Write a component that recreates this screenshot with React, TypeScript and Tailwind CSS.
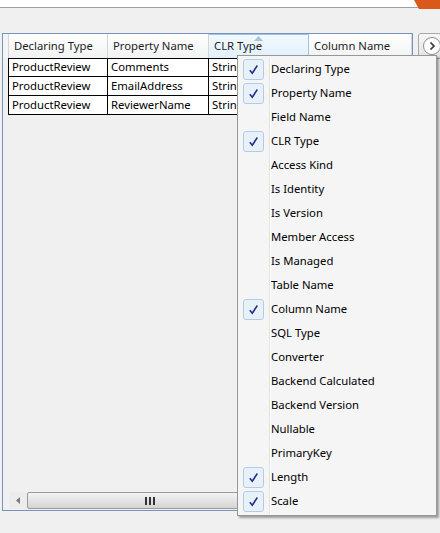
import { Fragment } from "react";

type Item = { label: string; checked: boolean };

const columns = [
    { name: "Declaring Type", w: "w-[99px]" },
    { name: "Property Name", w: "w-[101px]" },
    { name: "CLR Type", w: "w-[100px]", active: true },
    { name: "Column Name", w: "w-[103px]" },
];

const rows = [
    ["ProductReview", "Comments", "String", ""],
    ["ProductReview", "EmailAddress", "String", ""],
    ["ProductReview", "ReviewerName", "String", ""],
];

const menu: Item[] = [
    { label: "Declaring Type", checked: true },
    { label: "Property Name", checked: true },
    { label: "Field Name", checked: false },
    { label: "CLR Type", checked: true },
    { label: "Access Kind", checked: false },
    { label: "Is Identity", checked: false },
    { label: "Is Version", checked: false },
    { label: "Member Access", checked: false },
    { label: "Is Managed", checked: false },
    { label: "Table Name", checked: false },
    { label: "Column Name", checked: true },
    { label: "SQL Type", checked: false },
    { label: "Converter", checked: false },
    { label: "Backend Calculated", checked: false },
    { label: "Backend Version", checked: false },
    { label: "Nullable", checked: false },
    { label: "PrimaryKey", checked: false },
    { label: "Length", checked: true },
    { label: "Scale", checked: true },
];

function Check() {
    return (
        <div className="w-[21px] h-[21px] rounded-[3px] border border-[#b5cbe4] bg-[#e8f0fa] flex items-center justify-center">
            <svg width="11" height="11" viewBox="0 0 11 11">
                <path d="M1.8 6.2 L4.3 9.2 L9.3 1.5" fill="none" stroke="#1b2a8c" strokeWidth="1.5" />
            </svg>
        </div>
    );
}

export default function App() {
    return (
        <div className="relative w-[440px] h-[533px] overflow-hidden bg-[#f0f0f0] text-[11.3px] text-black" style={{ fontFamily: "'Noto Sans', 'Liberation Sans', sans-serif" }}>
            {/* top strip */}
            <div className="h-[8px] bg-white border-b border-[#a0a0a0]" />
            <svg className="absolute top-0 right-0" width="30" height="9" viewBox="0 0 30 9">
                <path d="M4 0 L30 0 L30 9 L9 9 Z" fill="#d9581a" />
            </svg>

            <div className="flex items-start mt-[25px]">
                {/* grid panel */}
                <div className="ml-[2px] w-[411px] h-[478px] border border-[#7594bb] bg-[#f0f0f0] flex flex-col">
                    {/* header */}
                    <div className="flex h-[24px]">
                        <div className="w-[6px] border-r border-[#d5d5d5] bg-[#f4f4f4]" />
                        {columns.map((c) => (
                            <div
                                key={c.name}
                                className={`${c.w} relative flex items-center pl-[5px] border-r ${c.active ? "bg-gradient-to-b from-[#f3f9fd] to-[#e0f0fb] border-[#96c7ea] border-t" : "bg-gradient-to-b from-white to-[#f1f2f3] border-[#d5d5d5]"}`}
                            >
                                {c.active && (
                                    <svg className="absolute top-[1px] left-[45px]" width="9" height="5" viewBox="0 0 9 5">
                                        <path d="M0 5 L4.5 0 L9 5 Z" fill="#a7c4da" />
                                    </svg>
                                )}
                                <span className="text-[#1e1e1e]">{c.name}</span>
                            </div>
                        ))}
                    </div>
                    {/* rows */}
                    <div className="flex flex-col">
                        {rows.map((r, i) => (
                            <div key={i} className="flex h-[19px]">
                                <div className="w-[6px] bg-[#f0f0f0] border-r border-black" />
                                {r.map((v, j) => (
                                    <Fragment key={j}>
                                        <div className={`${columns[j].w} bg-white border-b border-r border-black ${i === 0 ? "border-t" : ""} flex items-center pl-[3px] overflow-hidden whitespace-nowrap`}>
                                            {v}
                                        </div>
                                    </Fragment>
                                ))}
                            </div>
                        ))}
                    </div>
                    <div className="flex-1" />
                    {/* horizontal scrollbar */}
                    <div className="flex h-[17px] mb-[1px] ml-[6px]">
                        <div className="w-[18px] bg-[#ececec] flex items-center justify-center">
                            <svg width="5" height="7" viewBox="0 0 5 7">
                                <path d="M4 0 L0 3.5 L4 7 Z" fill="#7c7c7c" />
                            </svg>
                        </div>
                        <div className="flex-1 border border-[#9a9a9a] rounded-[2px] bg-gradient-to-b from-[#f3f3f3] to-[#d4d4d4] flex items-center">
                            <div className="ml-[117px] flex gap-[2px]">
                                <div className="w-[2px] h-[8px] bg-[#333]" />
                                <div className="w-[2px] h-[8px] bg-[#333]" />
                                <div className="w-[2px] h-[8px] bg-[#333]" />
                            </div>
                        </div>
                    </div>
                </div>

                {/* side button */}
                <div className="ml-[5px] w-[30px] h-[26px] rounded-[3px] border border-[#a8a8a8] bg-gradient-to-b from-[#f8f8f8] to-[#e2e2e2] flex items-center pl-[4px]">
                    <div className="w-[18px] h-[18px] rounded-full border border-[#8d8d8d] bg-white flex items-center justify-center">
                        <svg width="7" height="8" viewBox="0 0 7 8">
                            <path d="M1.5 0.5 L5 4 L1.5 7.5" fill="none" stroke="#333" strokeWidth="1.6" />
                        </svg>
                    </div>
                </div>
            </div>

            {/* context menu */}
            <div className="absolute left-[237px] top-[55px] w-[200px] h-[461px] border border-[#979797] bg-[#f5f5f5] py-[1px] shadow-[2px_2px_2px_rgba(0,0,0,0.35)]">
                <div className="absolute left-[31px] top-[1px] bottom-[1px] w-[1px] bg-[#e2e3e3]" />
                <div className="absolute left-[32px] top-[1px] bottom-[1px] w-[1px] bg-white" />
                {menu.map((m) => (
                    <div key={m.label} className="relative flex items-center h-[24px]">
                        <div className="w-[33px] pl-[5px] flex items-center">{m.checked && <Check />}</div>
                        <span className="whitespace-nowrap">{m.label}</span>
                    </div>
                ))}
            </div>
        </div>
    );
}
